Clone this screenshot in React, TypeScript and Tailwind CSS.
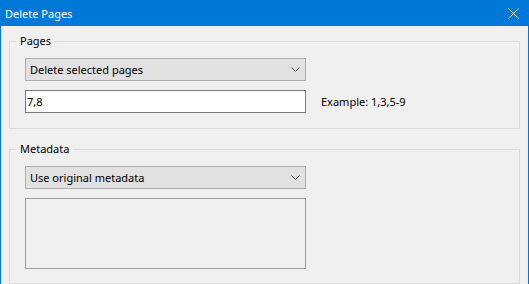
import React from "react";

function Chevron() {
  return (
    <svg width="9" height="5" viewBox="0 0 9 5" className="shrink-0">
      <path d="M0.5 0.5 L4.5 4.5 L8.5 0.5" fill="none" stroke="#505050" strokeWidth="1" />
    </svg>
  );
}

function Select({ label }: { label: string }) {
  return (
    <div className="w-[281px] h-[23px] bg-[#e1e1e1] border border-[#adadad] flex items-center justify-between pl-[4px] pr-[5px]">
      <span className="text-black leading-none">{label}</span>
      <Chevron />
    </div>
  );
}

export default function App() {
  return (
    <div className="w-[529px] h-[284px] overflow-hidden bg-[#0078d7] flex flex-col font-['Noto_Sans',sans-serif] text-[11px]">
      <div className="h-[26px] shrink-0 flex items-center justify-between pl-[5px] pr-[10px] text-white">
        <span className="leading-none">Delete Pages</span>
        <svg width="11" height="11" viewBox="0 0 11 11">
          <path d="M0.5 0.5 L10.5 10.5 M10.5 0.5 L0.5 10.5" stroke="white" strokeWidth="1" />
        </svg>
      </div>
      <div className="flex-1 mx-px bg-[#f0f0f0] px-[8px] pt-[7px] flex flex-col">
        <fieldset className="border border-[#dcdcdc] m-0 p-0 min-w-0">
          <legend className="ml-[6px] px-[4px] leading-[16px] text-black">Pages</legend>
          <div className="pl-[15px] pt-[9px] pb-[15px] flex flex-col gap-[9px]">
            <Select label="Delete selected pages" />
            <div className="flex items-center">
              <div className="w-[281px] h-[23px] bg-white border border-[#7a7a7a] flex items-center pl-[1px]">
                <span className="text-black leading-none">7,8</span>
              </div>
              <span className="ml-[15px] text-black leading-none">Example: 1,3,5-9</span>
            </div>
          </div>
        </fieldset>
        <fieldset className="border border-[#dcdcdc] m-0 p-0 mt-[12px] min-w-0 flex-1">
          <legend className="ml-[6px] px-[4px] leading-[16px] text-black">Metadata</legend>
          <div className="pl-[15px] pt-[9px] flex flex-col gap-[9px]">
            <Select label="Use original metadata" />
            <div className="w-[281px] h-[71px] border border-[#a0a0a0] bg-[#f0f0f0]" />
          </div>
        </fieldset>
      </div>
    </div>
  );
}
